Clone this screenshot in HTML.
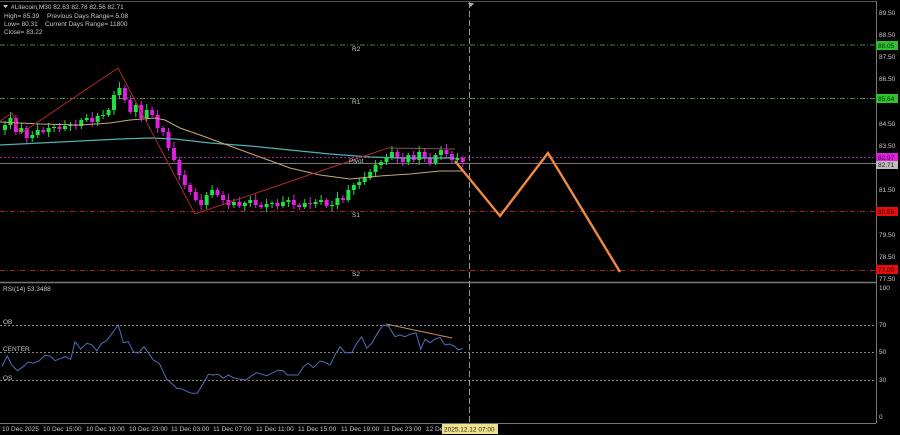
<!DOCTYPE html>
<html><head><meta charset="utf-8"><style>
html,body{margin:0;padding:0;background:#000;}
svg{display:block;}
text{font-family:"Liberation Sans",sans-serif;font-size:6.5px;fill:#c8c8c8;}
</style></head><body>
<svg id="s" width="900" height="435" viewBox="0 0 900 435" xmlns="http://www.w3.org/2000/svg">
<rect width="900" height="435" fill="#000"/>
<line x1="0" y1="1.5" x2="876" y2="1.5" stroke="#555" stroke-width="1"/>
<line x1="876.5" y1="1" x2="876.5" y2="423" stroke="#777" stroke-width="1"/>
<line x1="0" y1="282.5" x2="876" y2="282.5" stroke="#777" stroke-width="1.5"/>
<line x1="0" y1="423.5" x2="876" y2="423.5" stroke="#777" stroke-width="1"/>
<line x1="0" y1="45" x2="876" y2="45" stroke="#3f8f3f" stroke-dasharray="5,2,1,2" stroke-width="1"/>
<line x1="0" y1="98.5" x2="876" y2="98.5" stroke="#3f8f3f" stroke-dasharray="5,2,1,2" stroke-width="1"/>
<line x1="0" y1="157.5" x2="876" y2="157.5" stroke="#a020b0" stroke-dasharray="2,2" stroke-width="1"/>
<line x1="0" y1="163.5" x2="876" y2="163.5" stroke="#777" stroke-width="1"/>
<line x1="0" y1="211.5" x2="876" y2="211.5" stroke="#b02020" stroke-dasharray="5,2,1,2" stroke-width="1"/>
<line x1="0" y1="270.5" x2="876" y2="270.5" stroke="#b02020" stroke-dasharray="5,2,1,2" stroke-width="1"/>
<line x1="0" y1="325.5" x2="876" y2="325.5" stroke="#888" stroke-dasharray="2,2" stroke-width="1"/>
<line x1="0" y1="352.5" x2="876" y2="352.5" stroke="#888" stroke-dasharray="2,2" stroke-width="1"/>
<line x1="0" y1="380.5" x2="876" y2="380.5" stroke="#888" stroke-dasharray="2,2" stroke-width="1"/>
<line x1="469.5" y1="2" x2="469.5" y2="423" stroke="#999" stroke-dasharray="6,3" stroke-width="1"/>
<polygon points="468,3 474,3 471,7" fill="#aaa"/>
<g id="candles"></g>
<polyline fill="none" stroke="#4fb0b0" stroke-width="1.2" points="0,145 60,142 120,139 150,138 175,139 210,143 250,146 290,150 330,154 370,157 400,158 440,158 455,158"/>
<polyline fill="none" stroke="#c8a878" stroke-width="1" points="0,122 40,124 80,125 110,123 130,120 155,118 165,120 180,128 200,135 230,146 260,157 290,168 320,175 350,179 380,176 410,174 440,171 462,171"/>
<polyline fill="none" stroke="#b02828" stroke-width="1" points="0,121 12,113 20,134 118,68 195,214 388,148"/>
<polyline fill="none" stroke="#8a5050" stroke-width="1" points="388,148 455,149"/>
<polyline fill="none" stroke="#f08a40" stroke-width="2.4" points="455,161 500,216 548,153 620,272"/>
<polyline id="rsi" fill="none" stroke="#4e6fb8" stroke-width="1"/>
<line x1="386" y1="324" x2="452" y2="338" stroke="#c88a60" stroke-width="1"/>
<polygon points="3,5 8,5 5.5,8" fill="#ccc"/>
<text x="11" y="9">#Litecoin,M30  82.63 82.78 82.56 82.71</text>
<text x="4" y="18">High= 85.39</text><text x="47" y="18">Previous Days Range= 5.08</text>
<text x="4" y="26">Low= 80.31</text><text x="45" y="26">Current Days Range= 11800</text>
<text x="4" y="34">Close= 83.22</text>
<text x="352" y="51" fill="#ddd">R2</text>
<text x="352" y="104" fill="#ddd">R1</text>
<text x="349" y="163" fill="#ddd">Pivot</text>
<text x="352" y="217" fill="#ddd">S1</text>
<text x="352" y="276" fill="#ddd">S2</text>
<text x="3" y="291">RSI(14) 53.3488</text>
<text x="3" y="324">OB</text>
<text x="3" y="351">CENTER</text>
<text x="3" y="380">OS</text>
<g fill="#aaa">
<text x="879" y="15">89.50</text><text x="879" y="37">88.50</text><text x="879" y="59">87.50</text>
<text x="879" y="81">86.50</text><text x="879" y="126">84.50</text><text x="879" y="148">83.50</text>
<text x="879" y="192">81.50</text><text x="879" y="237">79.50</text><text x="879" y="259">78.50</text>
<text x="879" y="281">77.50</text>
<text x="879" y="290">100</text><text x="879" y="327">70</text><text x="879" y="354">50</text>
<text x="879" y="382">30</text><text x="879" y="419">0</text>
</g>
<rect x="876" y="41" width="22" height="9" fill="#30c030"/><text x="878" y="48" style="fill:#003000">88.05</text>
<rect x="876" y="94" width="22" height="9" fill="#30c030"/><text x="878" y="101" style="fill:#003000">85.64</text>
<rect x="876" y="153" width="22" height="9" fill="#e020e0"/><text x="878" y="160" style="fill:#400040">82.97</text>
<rect x="876" y="161" width="22" height="8" fill="#bbb"/><text x="878" y="167" style="fill:#222">82.71</text>
<rect x="876" y="207" width="22" height="9" fill="#e01010"/><text x="878" y="214" style="fill:#400000">80.56</text>
<rect x="876" y="265" width="22" height="9" fill="#e01010"/><text x="878" y="272" style="fill:#400000">77.09</text>
<g fill="#aaa">
<text x="2" y="431">10 Dec 2025</text><text x="43" y="431">10 Dec 15:00</text><text x="86" y="431">10 Dec 19:00</text>
<text x="129" y="431">10 Dec 23:00</text><text x="171" y="431">11 Dec 03:00</text><text x="213" y="431">11 Dec 07:00</text>
<text x="256" y="431">11 Dec 11:00</text><text x="298" y="431">11 Dec 15:00</text><text x="341" y="431">11 Dec 19:00</text>
<text x="383" y="431">11 Dec 23:00</text><text x="426" y="431">12 Dec</text>
</g>
<rect x="442" y="424" width="56" height="10" fill="#f0e28a"/><text x="444" y="431.5" style="fill:#222">2025.12.12 07:00</text>
</svg>
<script>
(function(){
var c=[130,125,118,132,128,138,135,130,132,128,127,129,126,125,126,120,118,122,116,115,110,95,88,100,112,105,118,110,115,128,132,148,160,175,185,192,200,205,195,190,195,200,205,202,206,203,200,205,207,204,203,206,202,200,205,207,203,204,202,200,206,205,198,200,190,185,182,178,172,165,162,158,152,158,162,155,160,152,158,163,155,150,154,160,158,162];
var g=document.getElementById('candles'),h='';
for(var i=1;i<c.length;i++){var x=3+(i-1)*5.45,o=c[i-1],cl=c[i],up=cl<o,tp=Math.min(o,cl),bt=Math.max(o,cl);if(bt-tp<1)bt=tp+1;
var col=up?'#22e040':'#e020e0',w=(i*7)%5;
h+='<line x1="'+(x+2)+'" y1="'+(tp-2-w)+'" x2="'+(x+2)+'" y2="'+(bt+2+(i*3)%4)+'" stroke="'+col+'" stroke-width="1"/>';
h+='<rect x="'+x+'" y="'+tp+'" width="4" height="'+(bt-tp)+'" fill="'+col+'"/>';}
g.innerHTML=h;
var r=[[5,260],[22,228],[35,255],[52,272],[70,260],[85,246],[100,250],[118,242],[135,226],[150,228],[165,242],[180,236],[195,230],[212,238],[225,185],[242,207],[260,190],[275,194],[290,212],[305,190],[320,182],[340,155],[355,135],[370,188],[385,185],[400,215],[415,220],[432,200],[445,218],[460,240],[478,250],[500,298],[515,310],[530,325],[548,328],[565,336],[575,340],[592,340],[610,310],[625,283],[640,285],[655,283],[670,295],[685,285],[700,293],[720,298],[738,300],[755,287],[770,278],[785,283],[800,287],[815,280],[835,270],[850,273],[862,285],[878,285],[895,285],[910,260],[925,250],[940,263],[960,243],[975,247],[990,255],[1005,225],[1020,200],[1035,218],[1055,218],[1070,190],[1085,170],[1100,205],[1115,190],[1135,155],[1150,135],[1165,138],[1185,170],[1200,165],[1215,170],[1230,163],[1248,158],[1262,208],[1275,178],[1290,188],[1305,177],[1320,172],[1335,195],[1350,192],[1365,200],[1375,210],[1388,205]];
document.getElementById('rsi').setAttribute('points',r.map(function(p){return (p[0]/3).toFixed(1)+','+(p[1]/3+280).toFixed(1)}).join(' '));
})();
</script>
</body></html>
